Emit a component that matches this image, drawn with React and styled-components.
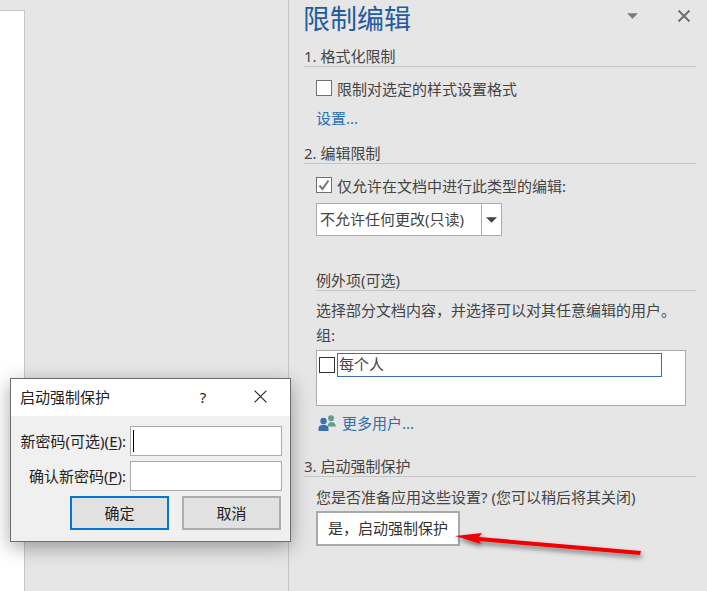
import React from 'react';
import styled, { createGlobalStyle } from 'styled-components';

const GlobalStyle = createGlobalStyle`
  html, body {
    margin: 0;
    padding: 0;
    background: #e6e6e6;
  }
  * {
    box-sizing: border-box;
  }
`

const Screen = styled.div`
  position: relative;
  display: flex;
  width: 707px;
  height: 591px;
  overflow: hidden;
  background: #e6e6e6;
  color: #444;
  font-family: "Noto Sans", "Noto Sans CJK SC", sans-serif;
  font-size: 15px;
`

const DocArea = styled.div`
  flex: none;
  width: 289px;
  height: 100%;
  padding-top: 10px;
  border-right: 1px solid #c4c4c4;
`

const Sheet = styled.div`
  width: 25px;
  height: 100%;
  background: #fff;
  border-top: 1px solid #c8c8c8;
  border-right: 1px solid #c8c8c8;
`

const Panel = styled.div`
  flex: 1;
  display: flex;
  flex-direction: column;
  padding-left: 15px;
  padding-right: 11px;
`

const PanelHeader = styled.div`
  display: flex;
  align-items: center;
  height: 36px;
  margin-bottom: 8px;
`

const PanelTitle = styled.div`
  flex: 1;
  margin-left: -1px;
  padding-top: 2px;
  font-size: 27px;
  line-height: 36px;
  color: #1f5c9e;
`

const PanelTools = styled.div`
  display: flex;
  align-items: center;
  gap: 40px;
  margin-right: 6px;
  margin-top: -4px;
`

const Heading = styled.div`
  height: 23px;
  margin-left: ${p => p.$indent || 0}px;
  margin-top: ${p => p.$top || 0}px;
  line-height: 24px;
  border-bottom: 1px solid #c6c6c6;
`

const Body = styled.div`
  display: flex;
  flex-direction: column;
  margin-left: 12px;
`

const CheckRow = styled.label`
  display: flex;
  align-items: center;
  gap: 5px;
  height: 22px;
  margin-top: ${p => p.$top || 0}px;
`

const Check = styled.span`
  display: flex;
  flex: none;
  align-items: center;
  justify-content: center;
  width: 16px;
  height: 16px;
  background: #fff;
  border: 1px solid ${p => p.$dark ? '#333' : '#707070'};
`

const LinkText = styled.a`
  color: #2f6fb0;
  line-height: 22px;
  margin-top: ${p => p.$top || 0}px;
`

const Select = styled.div`
  display: flex;
  width: 186px;
  height: 33px;
  margin-top: 7px;
  background: #fff;
  border: 1px solid #ababab;
`

const SelectValue = styled.div`
  flex: 1;
  padding-left: 3px;
  line-height: 31px;
`

const SelectArrow = styled.div`
  display: flex;
  align-items: center;
  justify-content: center;
  width: 20px;
  border-left: 1px solid #ababab;
`

const Line = styled.div`
  line-height: 22px;
  margin-top: ${p => p.$top || 0}px;
`

const GroupBox = styled.div`
  display: flex;
  align-items: flex-start;
  gap: 2px;
  width: 370px;
  height: 56px;
  margin-top: 4px;
  padding: 2px;
  background: #fff;
  border: 1px solid #ababab;
`

const GroupCheck = styled(Check)`
  margin-top: 4px;
`

const GroupEntry = styled.div`
  width: 325px;
  height: 24px;
  padding-left: 1px;
  line-height: 20px;
  border: 1px solid #3f6ab0;
`

const MoreUsers = styled.div`
  display: flex;
  align-items: center;
  gap: 6px;
  height: 22px;
  margin-top: 6px;
  margin-left: 2px;
`

const YesButton = styled.div`
  width: 144px;
  height: 35px;
  margin-top: 3px;
  padding-left: 10px;
  line-height: 31px;
  color: #333;
  background: #fff;
  border: 2px solid #a9a9a9;
`

const Dialog = styled.div`
  position: absolute;
  left: 10px;
  top: 378px;
  width: 281px;
  height: 164px;
  background: #f0f0f0;
  border: 1px solid #6d6d6d;
  box-shadow: 0 5px 18px rgba(0, 0, 0, 0.35);
  color: #222;
  z-index: 2;
`

const DialogTitleBar = styled.div`
  display: flex;
  align-items: center;
  height: 37px;
  padding-left: 9px;
  padding-bottom: 2px;
  background: #fff;
`

const DialogTitle = styled.div`
  flex: 1;
`

const TitleButton = styled.div`
  display: flex;
  align-items: center;
  justify-content: center;
  width: ${p => p.$w}px;
  font-size: 15px;
`

const DialogBody = styled.div`
  display: grid;
  grid-template-columns: 119px 152px;
  gap: 5px 0;
  justify-content: start;
  padding-top: 10px;
`

const FieldLabel = styled.label`
  padding-right: 4px;
  text-align: right;
  line-height: 30px;
  white-space: nowrap;

  u {
    text-underline-offset: 2px;
  }
`

const Field = styled.div`
  position: relative;
  height: 30px;
  background: #fff;
  border: 1px solid #ababab;
`

const Caret = styled.span`
  position: absolute;
  left: 2px;
  top: 3px;
  width: 1px;
  height: 22px;
  background: #000;
`

const DialogButtons = styled.div`
  display: flex;
  gap: 13px;
  margin-top: 5px;
  margin-left: 59px;
`

const DialogButton = styled.div`
  width: 99px;
  height: 34px;
  text-align: center;
  line-height: 30px;
  background: #e1e1e1;
  border: 2px solid ${p => p.$primary ? '#0078d7' : '#adadad'};
`

const ArrowLayer = styled.svg`
  position: absolute;
  left: 445px;
  top: 520px;
  z-index: 1;
`

const ChevronDown = ({ color, w, h }) => (
  <svg width={w} height={h} viewBox="0 0 10 5">
    <path d="M0 0H10L5 5Z" fill={color} />
  </svg>
)

const CloseIcon = ({ size, color, stroke }) => (
  <svg width={size} height={size} viewBox="0 0 12 12">
    <path d="M.5.5L11.5 11.5M11.5.5L.5 11.5" stroke={color} strokeWidth={stroke} fill="none" />
  </svg>
)

const CheckMark = () => (
  <svg width="12" height="12" viewBox="0 0 12 12">
    <path d="M1.5 6.5L4.5 10L10.5 1.5" stroke="#7a7a7a" strokeWidth="2" fill="none" />
  </svg>
)

const UsersIcon = () => (
  <svg width="18" height="16" viewBox="0 0 18 16">
    <circle cx="13" cy="3.2" r="3" fill="#5f9f8c" />
    <path d="M9.5 11.5C10 8 11.5 7 13.5 7C15.8 7 17.5 8.5 18 11.5Z" fill="#5f9f8c" />
    <circle cx="5.5" cy="6" r="3.2" fill="#3b6fb0" />
    <path d="M.5 16V13.5C.5 11 2.5 9.8 5.5 9.8C8.5 9.8 10.5 11 10.5 13.5V16Z" fill="#3b6fb0" />
  </svg>
)

const App = () => {
  return (
    <>
      <GlobalStyle />
      <Screen>
        <DocArea>
          <Sheet />
        </DocArea>

        <Panel>
          <PanelHeader>
            <PanelTitle>限制编辑</PanelTitle>
            <PanelTools>
              <ChevronDown color="#7a7a7a" w={11} h={6} />
              <CloseIcon size={12} color="#6e6e6e" stroke={2} />
            </PanelTools>
          </PanelHeader>

          <Heading>1. 格式化限制</Heading>
          <Body>
            <CheckRow $top={10}>
              <Check />
              限制对选定的样式设置格式
            </CheckRow>
            <LinkText $top={8}>设置...</LinkText>
          </Body>

          <Heading $top={12}>2. 编辑限制</Heading>
          <Body>
            <CheckRow $top={10}>
              <Check><CheckMark /></Check>
              仅允许在文档中进行此类型的编辑:
            </CheckRow>
            <Select>
              <SelectValue>不允许任何更改(只读)</SelectValue>
              <SelectArrow>
                <ChevronDown color="#444" w={11} h={6} />
              </SelectArrow>
            </Select>
          </Body>

          <Heading $indent={12} $top={32}>例外项(可选)</Heading>
          <Body>
            <Line $top={8}>选择部分文档内容，并选择可以对其任意编辑的用户。</Line>
            <Line $top={3}>组:</Line>
            <GroupBox>
              <GroupCheck $dark />
              <GroupEntry>每个人</GroupEntry>
            </GroupBox>
            <MoreUsers>
              <UsersIcon />
              <LinkText>更多用户...</LinkText>
            </MoreUsers>
          </Body>

          <Heading $top={20}>3. 启动强制保护</Heading>
          <Body>
            <Line $top={9}>您是否准备应用这些设置? (您可以稍后将其关闭)</Line>
            <YesButton>是，启动强制保护</YesButton>
          </Body>
        </Panel>

        <Dialog>
          <DialogTitleBar>
            <DialogTitle>启动强制保护</DialogTitle>
            <TitleButton $w={54}>?</TitleButton>
            <TitleButton $w={60}>
              <CloseIcon size={13} color="#222" stroke={1} />
            </TitleButton>
          </DialogTitleBar>
          <DialogBody>
            <FieldLabel>新密码(可选)(<u>E</u>):</FieldLabel>
            <Field><Caret /></Field>
            <FieldLabel>确认新密码(<u>P</u>):</FieldLabel>
            <Field />
          </DialogBody>
          <DialogButtons>
            <DialogButton $primary>确定</DialogButton>
            <DialogButton>取消</DialogButton>
          </DialogButtons>
        </Dialog>

        <ArrowLayer width="210" height="50" viewBox="445 520 210 50">
          <defs>
            <filter id="arrowShadow" x="-10%" y="-60%" width="120%" height="260%">
              <feDropShadow dx="1" dy="3" stdDeviation="2.5" floodColor="#000" floodOpacity="0.5" />
            </filter>
          </defs>
          <path
            d="M455 536L482 533L479 537L641 551L640 555L479 541L481 544Z"
            fill="#f00000"
            filter="url(#arrowShadow)"
          />
        </ArrowLayer>
      </Screen>
    </>
  );
}

export default App;
